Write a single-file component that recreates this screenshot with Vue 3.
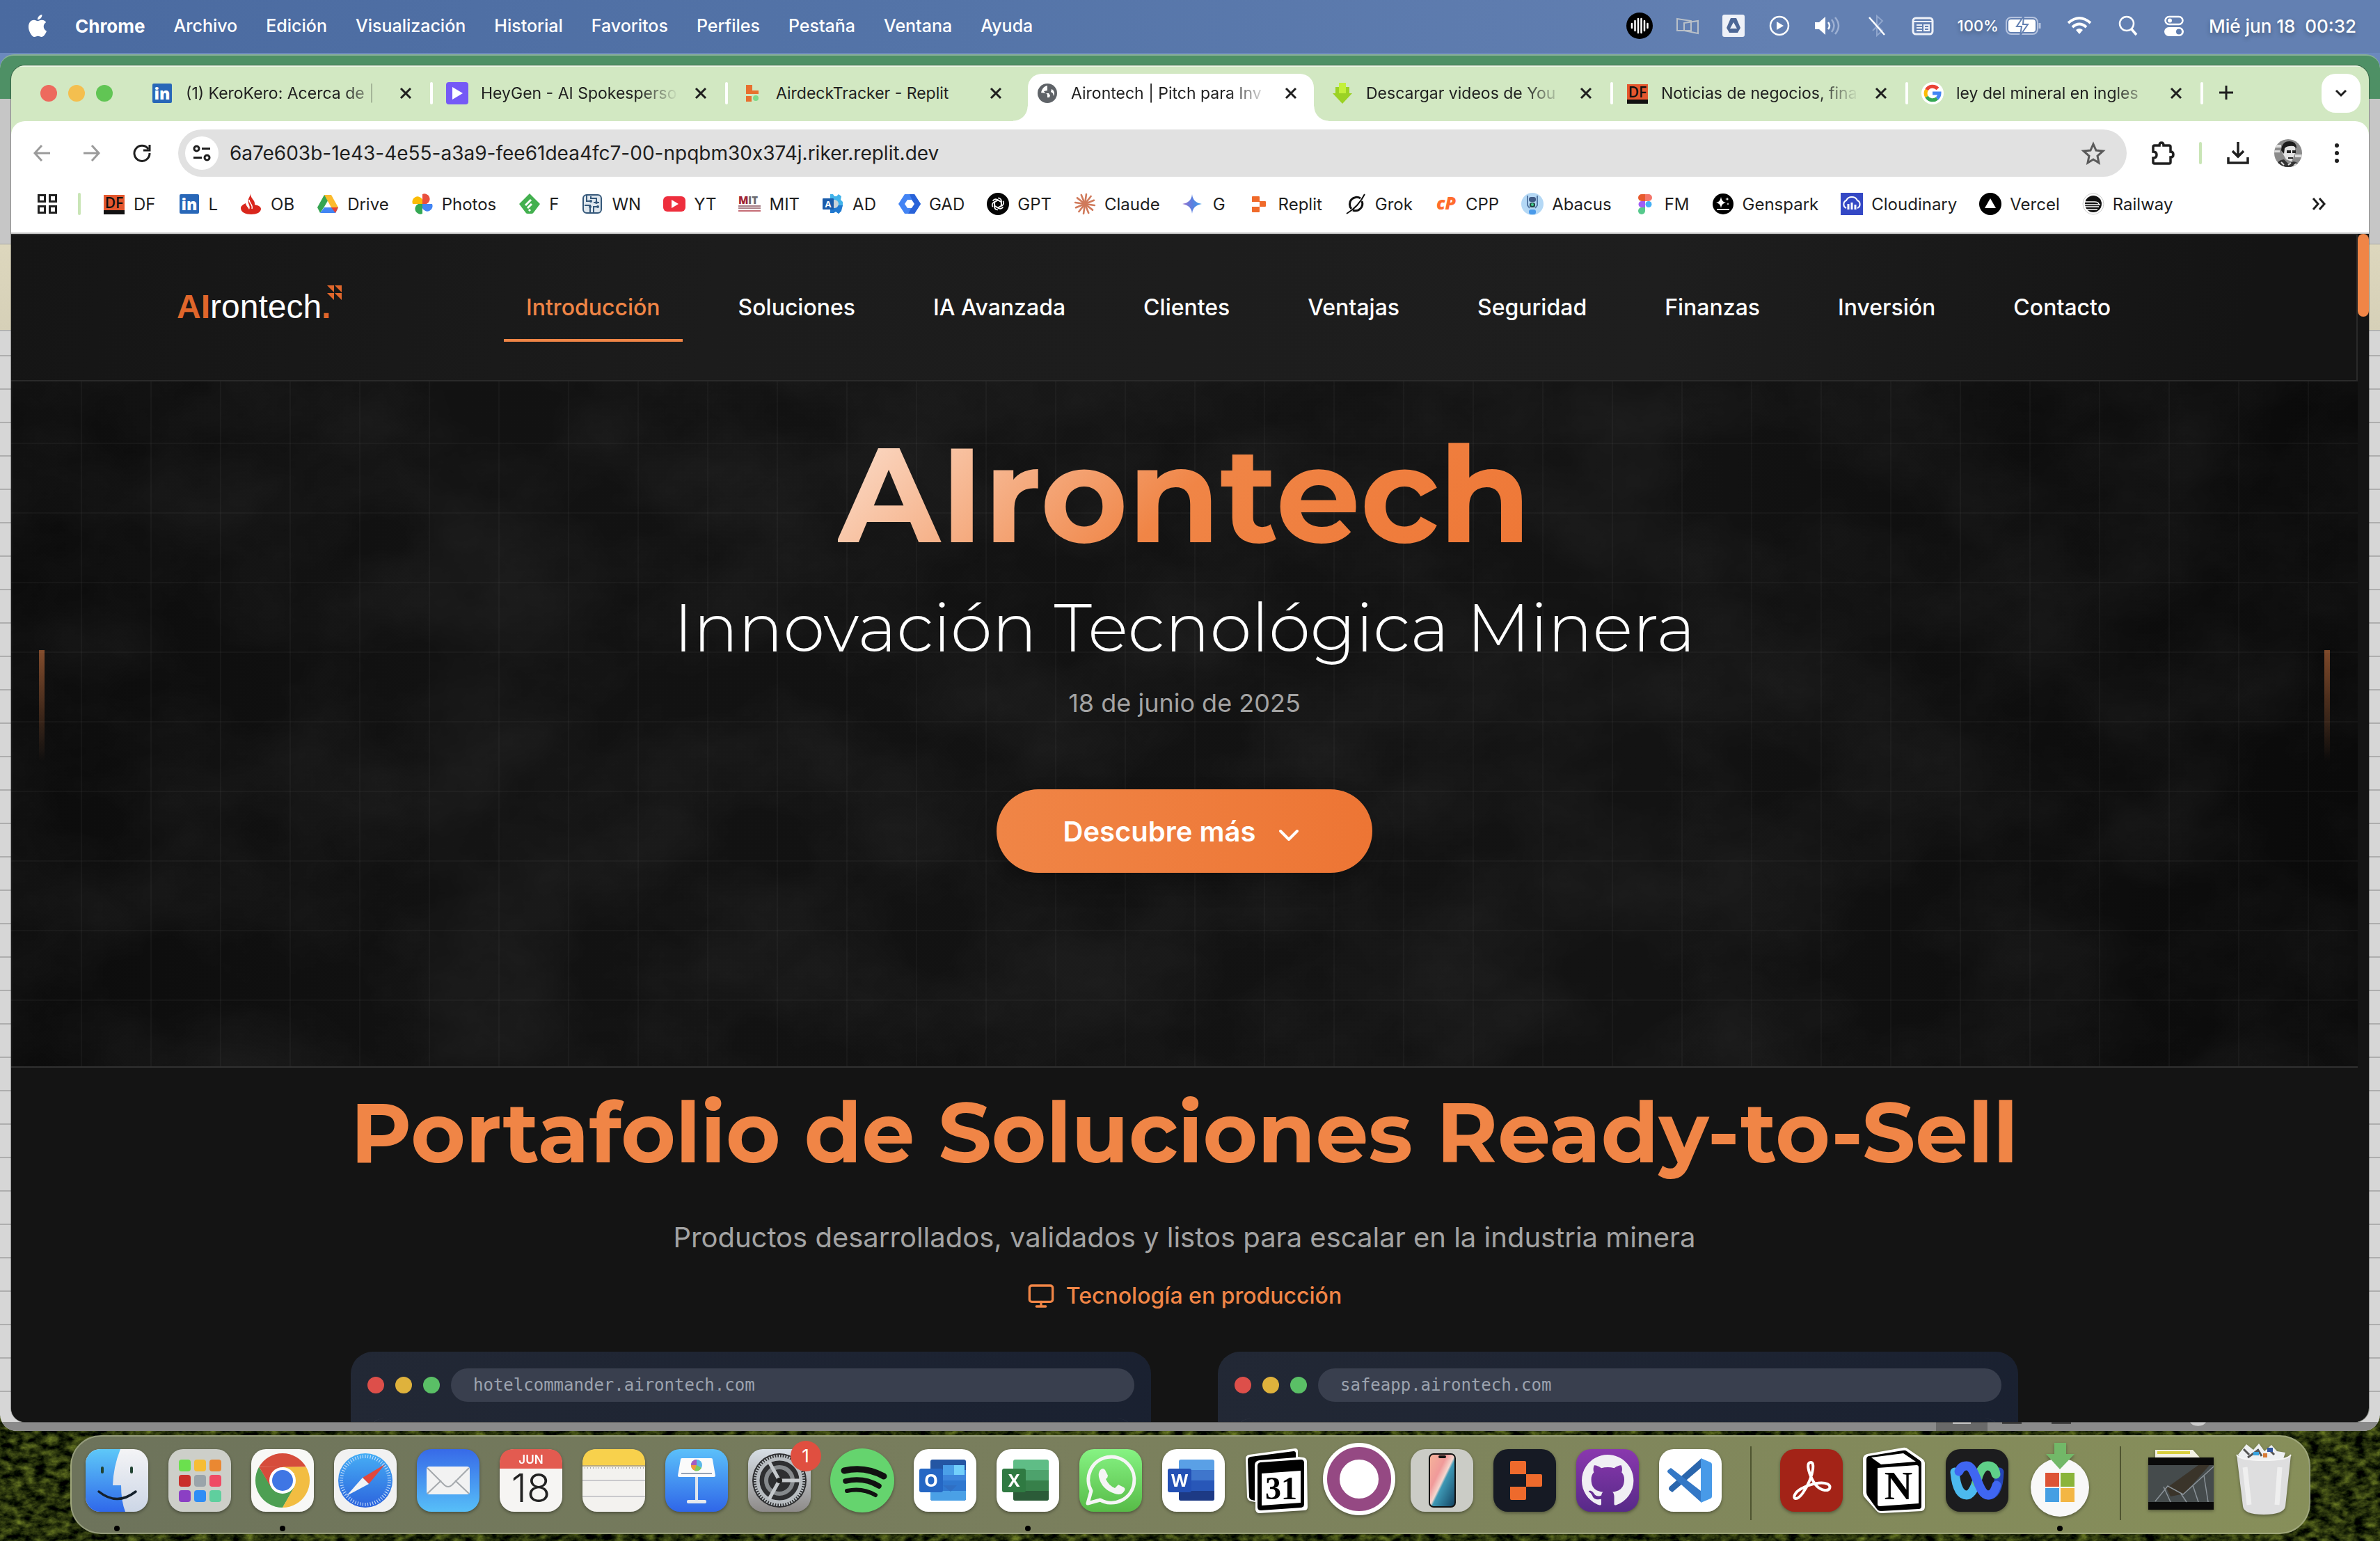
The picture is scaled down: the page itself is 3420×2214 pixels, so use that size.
<script setup>
const menus = ['Archivo', 'Edición', 'Visualización', 'Historial', 'Favoritos', 'Perfiles', 'Pestaña', 'Ventana', 'Ayuda']

const li = '<rect x="2" y="2" width="28" height="28" rx="2" fill="#2867b8"/><text x="16" y="25" font-family="Open Sans" font-weight="800" font-size="23" fill="#fff" text-anchor="middle">in</text>'
const df = '<rect x="1" y="3" width="30" height="27" fill="#e4572e"/><text x="16" y="22" font-family="Open Sans" font-size="21" font-weight="600" fill="#111" text-anchor="middle">DF</text><rect x="1" y="25" width="30" height="6" fill="#111"/>'

const tabs = [
  { title: '(1) KeroKero: Acerca de |', svg: li },
  { title: 'HeyGen - AI Spokesperso', svg: '<rect width="32" height="32" rx="4" fill="#7559f6"/><path d="M9 7l15 9-15 9z" fill="#fff"/>' },
  { title: 'AirdeckTracker - Replit', full: true, svg: '<path d="M7 4h9v8h9v5H7zM7 20h8v8H7z" fill="#e8702f"/><circle cx="21" cy="23" r="4" fill="#7fd98a"/>' },
  { title: 'Airontech | Pitch para Inv', active: true, svg: '<circle cx="16" cy="16" r="14" fill="#5f6368"/><path d="M16 5c-5 1-8 5-9 10l6 1c2 0 3 1 3 3v3h3l1-3-2-3h-5l-2-3 5-1V8zm6 5l-1 4 3 2 1 4c2-4 1-8-3-10z" fill="#fff"/>' },
  { title: 'Descargar videos de You', svg: '<path d="M11 1h10v6h5v9h4L16 31 2 16h4V7h5z" fill="#9bd224"/><path d="M11 1h10v15H11z" fill="#c3f03a"/>' },
  { title: 'Noticias de negocios, fina', svg: df },
  { title: 'ley del mineral en ingles', svg: '<circle cx="16" cy="16" r="16" fill="#fff"/><g fill="none" stroke-width="5"><path d="M23.500 9.500A10 10 0 0 0 7.500 11" stroke="#ea4335"/><path d="M7.500 11a10 10 0 0 0 0 10" stroke="#fbbc05"/><path d="M7.500 21a10 10 0 0 0 15 2.500" stroke="#34a853"/><path d="M22.500 23.500a10 10 0 0 0 3.500-7.500h-10" stroke="#4285f4"/></g>' }
]

const rays = Array.from({ length: 12 }, (_, i) => `<path d="M16 16V2" transform="rotate(${i * 30 + 8} 16 16)"/>`).join('')
const knot = [0, 60, 120, 180, 240, 300].map(a => `<path d="M16 7.500a5 5 0 0 1 5 4v7l-5 3" transform="rotate(${a} 16 16)"/>`).join('')

const bookmarks = [
  { t: 'DF', svg: df },
  { t: 'L', svg: li },
  { t: 'OB', svg: '<path d="M15 1c0 8 7 9 6 16 5 1 9 3 9 6 0 5-6 8-14 8S1 28 1 22c0-3 3-5 7-7 0 3 3 5 5 9 3-5-3-8-1-15 1-3 3-5 3-8z" fill="#d9261c"/><path d="M13 10c0 5 6 7 4 13" stroke="#fff" stroke-width="1.500" fill="none"/>' },
  { t: 'Drive', svg: '<path d="M11 3h10L11 20l-6 9-4-8z" fill="#35a552"/><path d="M11 3h10l10 18H21z" fill="#fcbb2d"/><path d="M11 21h20l-4 8H5z" fill="#4285f4"/><path d="M21 21h10l-4 8z" fill="#e54335"/>' },
  { t: 'Photos', svg: '<path d="M16 2v14h6a7 7 0 0 0-6-14z" fill="#e94f3d"/><path d="M30 16H16v6a7 7 0 0 0 14-6z" fill="#4285f4"/><path d="M16 30V16h-6a7 7 0 0 0 6 14z" fill="#34a853"/><path d="M2 16h14v-6a7 7 0 0 0-14 6z" fill="#fbbc05"/>' },
  { t: 'F', svg: '<path d="M16 1l15 15-9 12q-1 2-3 2h-6q-2 0-3-2L1 16z" fill="#43b04f"/><path d="M10 18l8-8M13 22l6-6M15 26l2-2" stroke="#fff" stroke-width="3"/>' },
  { t: 'WN', svg: '<rect x="3" y="3" width="26" height="26" rx="5" fill="#dfe7ee" stroke="#35587a" stroke-width="2"/><path d="M8 4v8h6M14 5v3h8v6M5 18h8v10M18 28v-8h6M18 14h8" stroke="#35587a" stroke-width="2" fill="none"/><g fill="#35587a"><circle cx="14" cy="12" r="2"/><circle cx="22" cy="14" r="2"/><circle cx="13" cy="20" r="2"/><circle cx="24" cy="20" r="2"/></g>' },
  { t: 'YT', svg: '<rect y="5" width="32" height="22" rx="6" fill="#ee2e3d"/><path d="M12 10l10 6-10 6z" fill="#fff"/>' },
  { t: 'MIT', svg: '<text x="0" y="16" font-family="Open Sans" font-weight="800" font-size="15" fill="#9e2235">M</text><text x="14" y="16" font-family="Open Sans" font-weight="800" font-size="15" fill="#6b6b70">IT</text><path d="M0 19h32M0 22h32" stroke="#8a5560" stroke-width="1.500"/><path d="M0 26h32" stroke="#c56c75" stroke-width="2"/>' },
  { t: 'AD', svg: '<path d="M12 2h4l2 3h3l3-3 4 3-1 5 3 3v6l-3 2 1 5-4 4-4-3-3 2h-5z" fill="#41b3ea"/><path d="M12 18h18l-2 8-4 4-4-3-3 2h-5z" fill="#2178cf"/><circle cx="18" cy="16" r="6" fill="#c9d3da"/><rect x="1" y="8" width="16" height="16" rx="1" fill="#1b5cab"/><text x="9" y="21" font-family="Open Sans" font-weight="700" font-size="13" fill="#fff" text-anchor="middle">A</text>' },
  { t: 'GAD', svg: '<path d="M9 2h14l9 14-9 14H9L0 16z" fill="#4384f4"/><path d="M16 2h7l9 14-9 14h-9l8-14z" fill="#2862d8"/><path d="M13 10h6l4 6-4 6h-6l-4-6z" fill="#fff"/>' },
  { t: 'GPT', svg: `<circle cx="16" cy="16" r="16" fill="#050505"/><g fill="none" stroke="#fff" stroke-width="1.600">${knot}</g>` },
  { t: 'Claude', svg: `<g stroke="#d07a5b" stroke-width="2.600" stroke-linecap="round">${rays}</g>` },
  { t: 'G', svg: '<defs><linearGradient id="gem"><stop offset="0" stop-color="#9b72cb"/><stop offset=".5" stop-color="#5b7fe0"/><stop offset="1" stop-color="#3fa0e8"/></linearGradient></defs><path d="M14 2q1 12 14 14-13 2-14 14-1-12-14-14 13-2 14-14z" fill="url(#gem)"/>' },
  { t: 'Replit', svg: '<path d="M7 5h9q1 0 1 1v7H6V6q0-1 1-1zM17 12h8q1 0 1 1v6q0 1-1 1h-8zM6 20h11v7q0 1-1 1H7q-1 0-1-1z" fill="#f06a2a"/>' },
  { t: 'Grok', svg: '<g fill="none" stroke="#111" stroke-width="3"><path d="M23 8a10 10 0 0 0-13 15M25 12a10 10 0 0 1-13 13"/><path d="M29 2Q20 20 3 30" stroke-width="2"/></g>' },
  { t: 'CPP', svg: '<text x="16" y="24" font-family="Open Sans" font-weight="800" font-style="italic" font-size="25" fill="#ff6c2c" text-anchor="middle">cP</text>' },
  { t: 'Abacus', svg: '<circle cx="16" cy="16" r="16" fill="#b4d8f5"/><path d="M9 4v14l3 4M23 4v14l-3 4" stroke="#5579a5" stroke-width="2" fill="none"/><rect x="11" y="6" width="10" height="7" rx="3" fill="#405a85"/><rect x="12" y="14" width="8" height="7" rx="3" fill="#244"/><circle cx="16" cy="17" r="2" fill="#3fd08c"/><rect x="11" y="24" width="10" height="7" rx="3" fill="#4a9aea"/>' },
  { t: 'FM', svg: '<path d="M11 2h5v10h-5a5 5 0 0 1 0-10z" fill="#e75b2e"/><path d="M16 2h5a5 5 0 0 1 0 10h-5z" fill="#f4756a"/><path d="M11 12h5v9h-5a4.500 4.500 0 0 1 0-9z" fill="#a05cf5"/><circle cx="21" cy="16.500" r="4.500" fill="#45b0f5"/><path d="M11 21h5v5a5 5 0 1 1-5-5z" fill="#56c98c"/>' },
  { t: 'Genspark', svg: '<circle cx="16" cy="16" r="15" fill="#000"/><path d="M13 6q1 7 7 8-6 1-7 8-1-7-7-8 6-1 7-8zM22 6q0 3 3 3-3 0-3 3 0-3-3-3 3 0 3-3zM23 14q0 2 2 2-2 0-2 2 0-2-2-2 2 0 2-2z" fill="#fff"/><path d="M7 24h18" stroke="#fff" stroke-width="2"/>' },
  { t: 'Cloudinary', svg: '<rect width="32" height="32" fill="#3448c5"/><path d="M8 22a6 6 0 0 1 0-11 9 9 0 0 1 16 0 6 6 0 0 1 0 11" fill="none" stroke="#fff" stroke-width="2"/><path d="M11 16v8M16 14v10M21 17v7" stroke="#fff" stroke-width="3"/>' },
  { t: 'Vercel', svg: '<circle cx="16" cy="16" r="16" fill="#000"/><path d="M16 8l8 14H8z" fill="#fff"/>' },
  { t: 'Railway', svg: '<circle cx="16" cy="16" r="15" fill="#fff" stroke="#ccc"/><circle cx="16" cy="16" r="12" fill="#111"/><path d="M4 13h14q5 0 6 3M4 17h22M4 20h20M6 24h16" stroke="#fff" stroke-width="1.500" fill="none"/>' }
]

const nav = ['Introducción', 'Soluciones', 'IA Avanzada', 'Clientes', 'Ventajas', 'Seguridad', 'Finanzas', 'Inversión', 'Contacto']
const cards = ['hotelcommander.airontech.com', 'safeapp.airontech.com']

const tile = f => `<rect width="90" height="90" rx="21" fill="${f}"/>`
const launch = ['#6be04e', '#f6bd35', '#ea8832', '#c9302a', '#9aa4aa', '#ef4a64', '#8b3fc4', '#2f8df5', '#5fcf9e']
  .map((c, i) => `<rect x="${15 + (i % 3) * 22}" y="${15 + Math.floor(i / 3) * 22}" width="17" height="17" rx="4" fill="${c}"/>`).join('')
const ticks = (r1, r2, n, w, c) => Array.from({ length: n }, (_, i) => `<path d="M45 ${45 - r1}V${45 - r2}" stroke="${c}" stroke-width="${w}" transform="rotate(${i * 360 / n} 45 45)"/>`).join('')
const office = (l, c, a) => `${tile('#fff')}<rect x="24" y="15" width="51" height="59" rx="3" fill="${a[0]}"/><path d="M24 30h51v15H24z" fill="${a[1]}"/><path d="M24 45h51v15H24z" fill="${a[2]}"/><path d="M24 60h51v11q0 3-3 3H27q-3 0-3-3z" fill="${a[3]}"/><rect x="8" y="28" width="34" height="34" rx="3" fill="${c}"/><text x="25" y="54" font-family="Open Sans" font-weight="700" font-size="25" fill="#fff" text-anchor="middle">${l}</text>`
const git = 'M8 0C3.58 0 0 3.58 0 8c0 3.54 2.29 6.53 5.47 7.59.4.07.55-.17.55-.38 0-.19-.01-.82-.01-1.49-2.01.37-2.53-.49-2.69-.94-.09-.23-.48-.94-.82-1.13-.28-.15-.68-.52-.01-.53.63-.01 1.08.58 1.23.82.72 1.21 1.87.87 2.33.66.07-.52.28-.87.51-1.07-1.78-.2-3.64-.89-3.64-3.95 0-.87.31-1.59.82-2.15-.08-.2-.36-1.02.08-2.12 0 0 .67-.21 2.2.82.64-.18 1.32-.27 2-.27.68 0 1.36.09 2 .27 1.53-1.04 2.2-.82 2.2-.82.44 1.1.16 1.92.08 2.12.51.56.82 1.27.82 2.15 0 3.07-1.87 3.75-3.65 3.95.29.25.54.73.54 1.48 0 1.07-.01 1.93-.01 2.2 0 .21.15.46.55.38A8.013 8.013 0 0016 8c0-4.42-3.58-8-8-8z'

const dock = [
  { n: 'Finder', dot: true, svg: '<defs><clipPath id="fc"><rect width="90" height="90" rx="21"/></clipPath><linearGradient id="fb" x2="0" y2="1"><stop stop-color="#5ec8f8"/><stop offset="1" stop-color="#2f68ea"/></linearGradient><linearGradient id="fw" x2="0" y2="1"><stop stop-color="#f4f4f6"/><stop offset="1" stop-color="#ccd6e6"/></linearGradient></defs><g clip-path="url(#fc)"><path d="M0 0h90v90H0z" fill="url(#fw)"/><path d="M0 0h50Q40 25 39 52h12q0 22 6 38H0z" fill="url(#fb)"/></g><path d="M24 27v6M66 27v6" stroke="#243" stroke-width="4" stroke-linecap="round"/><path d="M19 61q26 21 53 0" fill="none" stroke="#14202c" stroke-width="3.500" stroke-linecap="round"/>' },
  { n: 'Launchpad', svg: tile('#cdcfc9') + launch },
  { n: 'Google Chrome', dot: true, svg: tile('#f8f8f6') + '<path d="M11.200 25.500a39 39 0 0 1 67.600 0L45 26z" fill="#d64c3b"/><path d="M11.200 25.500a39 39 0 0 0 33.800 58.500L62 55 45 45 28 53z" fill="#4d9f53"/><path d="M78.800 25.500a39 39 0 0 1-33.800 58.500L62 54 62 35 45 25.500z" fill="#f2bd42"/><path d="M11.200 25.500L28 54 45 25.500z" fill="#d64c3b"/><circle cx="45" cy="45" r="19" fill="#fff"/><circle cx="45" cy="45" r="15" fill="#3f76e4"/>' },
  { n: 'Safari', svg: tile('#f1f1f1') + '<defs><linearGradient id="sf" x2="0" y2="1"><stop stop-color="#46aef5"/><stop offset="1" stop-color="#2c63dd"/></linearGradient></defs><circle cx="45" cy="45" r="39" fill="url(#sf)"/>' + ticks(37, 32, 60, 1, '#cfe4fb') + '<path d="M73 22L50 50l-9-9z" fill="#e2483d"/><path d="M18 67l23-26 9 9z" fill="#f1f3f5"/>' },
  { n: 'Mail', svg: '<defs><linearGradient id="ml" x2="0" y2="1"><stop stop-color="#376ae8"/><stop offset="1" stop-color="#57bff8"/></linearGradient></defs>' + tile('url(#ml)') + '<rect x="14" y="25" width="62" height="40" rx="4" fill="#f2f2f2"/><path d="M15 27l25 25q5 4 10 0l25-25M15 64l20-19M75 64L55 45" fill="none" stroke="#a5a9ad" stroke-width="2"/>' },
  { n: 'Calendario', svg: tile('#f6f5f3') + '<path d="M0 28V21Q0 0 21 0h48q21 0 21 21v7z" fill="#e35b50"/><text x="45" y="21" font-family="Inter" font-weight="600" font-size="17" fill="#fff" text-anchor="middle">JUN</text><text x="45" y="76" font-family="Inter" font-weight="300" font-size="56" fill="#222" text-anchor="middle">18</text>' },
  { n: 'Notas', svg: tile('#f3f2ef') + '<path d="M0 23V21Q0 0 21 0h48q21 0 21 21v2z" fill="#f8d14c"/><path d="M0 24h90" stroke="#b9a878" stroke-width="2"/><path d="M3 27h86" stroke="#aaa" stroke-width="2" stroke-dasharray="1 3"/><path d="M0 45h90M0 68h90" stroke="#c9c9cc" stroke-width="2"/>' },
  { n: 'Keynote', svg: '<defs><linearGradient id="kn" x2="0" y2="1"><stop stop-color="#5bc0fa"/><stop offset="1" stop-color="#2f66e8"/></linearGradient></defs>' + tile('url(#kn)') + '<path d="M43 40h4v34h-4z" fill="#dfe5ee"/><rect x="31" y="73" width="28" height="5" rx="2" fill="#e5e8ee"/><path d="M24 13h42q2 0 2 2l4 23q0 2-2 2H20q-2 0-2-2l4-23q0-2 2-2z" fill="#fbfbfb"/><path d="M23 35h44" stroke="#96a3b5" stroke-width="2"/><circle cx="45" cy="23" r="8" fill="#5ab8e8"/><path d="M45 23v-8a8 8 0 0 0-8 8z" fill="#a65abf"/><path d="M45 23h-8a8 8 0 0 0 6 8z" fill="#f09a3a"/><path d="M45 23l-3 8q6 2 10-4z" fill="#7dcc5a"/>' },
  { n: 'Ajustes del Sistema', badge: '1', svg: '<defs><linearGradient id="st" x2="0" y2="1"><stop stop-color="#d7dfe6"/><stop offset="1" stop-color="#8d8a88"/></linearGradient></defs>' + tile('url(#st)') + '<circle cx="45" cy="45" r="39" fill="#2e2f31"/>' + ticks(37, 33, 60, 2, '#bcc2c6') + '<circle cx="45" cy="45" r="31" fill="none" stroke="#b7bcc0" stroke-width="5"/><circle cx="45" cy="45" r="19" fill="none" stroke="#85898c" stroke-width="6"/><path d="M45 45h30M45 45L30 18M45 45L30 72" stroke="#c5c9cc" stroke-width="5"/><circle cx="45" cy="45" r="4" fill="#222"/>' },
  { n: 'Spotify', svg: '<circle cx="45" cy="45" r="46" fill="#65d46e"/><g fill="none" stroke="#111" stroke-linecap="round"><path d="M19 31q30-7 57 8" stroke-width="9"/><path d="M21 46q26-6 48 7" stroke-width="7.500"/><path d="M23 60q22-5 41 6" stroke-width="6"/></g>' },
  { n: 'Outlook', svg: office('O', '#2567c4', ['#2456a3', '#3e86dc', '#2f78d0', '#4aa0e6']) + '<path d="M42 23h16v14H42z" fill="#4ba0e8"/><path d="M58 23h15v14H58z" fill="#73d0fb"/><path d="M42 52h20l-9 9z" fill="#2f6fc4"/>' },
  { n: 'Excel', dot: true, svg: office('X', '#2f7a42', ['#5fbd86', '#4da26c', '#37804a', '#2b5b38']) },
  { n: 'WhatsApp', svg: '<defs><linearGradient id="wa" x2="0" y2="1"><stop stop-color="#86f383"/><stop offset="1" stop-color="#57bb47"/></linearGradient></defs>' + tile('url(#wa)') + '<path d="M12 78l5-18A33 33 0 1 1 30 73z" fill="none" stroke="#f5f5f5" stroke-width="5" stroke-linejoin="round"/><path d="M30 30q4-4 7 0l4 8q0 3-3 5 4 9 13 13l5-5 8 4q3 2 0 6-4 6-13 3Q32 58 28 40q-1-6 2-10z" fill="#f5f5f5"/>' },
  { n: 'Word', svg: office('W', '#2350b5', ['#5aa0e6', '#3f76cc', '#2857b8', '#1d3a85']) },
  { n: 'Notion Calendar', svg: '<path d="M6 8L72 -1q4 0 4 4v8l8 1q5 1 5 6l1 65q0 5-5 5l-64 4q-5 0-6-5V76l-6-1q-5-1-6-6L1 14q0-5 5-6z" fill="#fff"/><path d="M8 11l62-8q3 0 3 3v6l-52 4q-7 1-7 7v51l-4-1q-4-1-4-5L4 16q0-4 4-5z" fill="#000"/><path d="M22 19l58-4q5 0 5 5v59q0 4-4 5l-58 4q-5 0-5-5V24q0-4 4-5z" fill="#000"/><path d="M24 35l56-4v46l-56 4z" fill="#fff"/><text x="52" y="72" font-family="Liberation Serif" font-weight="700" font-size="46" text-anchor="middle">31</text>' },
  { n: 'Navegador', svg: '<circle cx="45" cy="43" r="52" fill="#fff"/><circle cx="45" cy="43" r="37" fill="none" stroke="#954983" stroke-width="18"/>' },
  { n: 'Duplicación del iPhone', svg: tile('#cbccc6') + '<defs><linearGradient id="ph" x2="1" y2="1"><stop stop-color="#f5b49a"/><stop offset=".35" stop-color="#f09a9a"/><stop offset=".5" stop-color="#f6d8cf"/><stop offset=".55" stop-color="#3d98b5"/><stop offset="1" stop-color="#123f5e"/></linearGradient></defs><rect x="27" y="7" width="37" height="76" rx="6" fill="url(#ph)" stroke="#111" stroke-width="2"/><rect x="40" y="9" width="11" height="4" rx="2" fill="#111"/>' },
  { n: 'Replit', svg: tile('#161a24') + '<path d="M26 17h19q2 0 2 2v17H24V19q0-2 2-2zM47 36h21q2 0 2 2v14q0 2-2 2H47zM24 54h23v17q0 2-2 2H26q-2 0-2-2z" fill="#ee6a2c"/>' },
  { n: 'GitHub Desktop', svg: '<defs><linearGradient id="gh" x2="0" y2="1"><stop stop-color="#8a38ae"/><stop offset="1" stop-color="#572a88"/></linearGradient></defs>' + tile('url(#gh)') + `<g transform="translate(8 8) scale(4.650)"><path d="${git}" fill="#f0eff4"/></g>` },
  { n: 'Visual Studio Code', svg: tile('#fff') + '<path d="M60 14L15 54q-2 3 0 5l4 3 41-35z" fill="#2a66ad"/><path d="M60 76L13 34q-2-2 0-4l4-3 43 33z" fill="#3478c6"/><path d="M60 13l14 6q2 1 2 3v46q0 2-2 3l-14 6z" fill="#489ae8"/>' },
  { sep: true },
  { n: 'Acrobat', svg: tile('#a32317') + '<path d="M44 19c-6 0-4 10 0 20 5 12 12 19 20 20 8 1 10-6 4-9-9-4-25 0-38 7-9 5-12 13-8 14 6 1 15-13 20-25 5-11 8-27 2-27z" fill="none" stroke="#fff" stroke-width="4"/>' },
  { n: 'Notion', svg: '<path d="M6 7L57-2q5-1 8 2l19 13q5 3 5 8v62q0 5-5 6l-57 3q-5 0-8-4L3 70q-3-3-3-7V14q0-5 6-7z" fill="#fff"/><path d="M8 10l49-8q4-1 6 1l17 12q4 2 4 6v61q0 4-4 4l-54 3q-4 0-6-3L7 68q-2-3-2-6V15q0-4 3-5z"/><path d="M12 12l46-6 18 12-50 4z" fill="#fff"/><path d="M21 27l56-4q3 0 3 3v52l-56 4q-3 0-3-3z" fill="#fff"/><text x="51" y="72" font-family="Liberation Serif" font-weight="700" font-size="56" text-anchor="middle">N</text>' },
  { n: 'Webex', svg: tile('#1c1c1e') + '<g fill="none" stroke-width="13" stroke-linecap="round"><path d="M77 33Q76 66 61 66" stroke="#2546b8"/><path d="M13 33Q16 66 30 66 39 66 46 42" stroke="#4cb9ee"/><path d="M44 48Q50 24 60 24q10 0 12 12" stroke="#5fd089"/><path d="M19 32q3-8 11-8c14 0 16 42 31 42q8 0 12-14" stroke="#3f66f2"/></g>' },
  { n: 'Microsoft', dot: true, svg: '<circle cx="45" cy="55" r="42" fill="#f8f8f8"/><path d="M24 34h20v20H24z" fill="#dd5436"/><path d="M46 34h20v20H46z" fill="#8ab43a"/><path d="M24 56h20v20H24z" fill="#459fe3"/><path d="M46 56h20v20H46z" fill="#f3b644"/><path d="M37-9h17V7h12L45 29 25 7h12z" fill="#72b868"/>' },
  { sep: true },
  { n: 'Descargas', svg: '<path d="M8 1h54l10 11H8z" fill="#f3f1e4"/><path d="M11 3h47v4H11z" fill="#d9cf3e"/><path d="M-2 12h94v75H-2z" fill="#0a0a0a"/><path d="M-2 23h94v53H-2z" fill="#454b4c"/><path d="M24 56L70 23h16L50 64l-20 4z" fill="#3a342a"/><path d="M8 75l18-22 22 12 44-40M20 54l10 22M45 64l8 12M62 52l8 24M78 38l6 38" stroke="#8a9298" stroke-width="1.500" fill="none"/>' },
  { n: 'Papelera', svg: '<path d="M8 8L20-7l10 8L38-8 46 3 56-6l8 9 12 2-4 12H14z" fill="#eef0f2"/><path d="M16 0l8 8M36 0l6 10M52 0l8 8M22 12L36 2" stroke="#555" stroke-width="3"/><path d="M30 4h8v5h-8z" fill="#38a3e0"/><path d="M50-2h8v6h-8z" fill="#3257a0"/><path d="M44 6h6v6h-6z" fill="#d77a36"/><path d="M6 8q4 8 39 8t39-8l-8 74q-2 12-31 12t-30-12z" fill="#dededf"/><path d="M6 8q4 8 39 8t39-8" fill="none" stroke="#f5f5f5" stroke-width="2"/><path d="M18 26l6 54M68 26l-4 54" stroke="#efefef" stroke-width="7"/>' }
]
</script>

<template>
  <div class="desktop">
    <svg class="grass" aria-hidden="true">
      <filter id="turf" x="0" y="0" width="100%" height="100%" color-interpolation-filters="sRGB">
        <feTurbulence type="fractalNoise" baseFrequency=".06 .1" numOctaves="5" seed="4" />
        <feColorMatrix values=".7 0 0 0 -.2  .76 0 0 0 -.19  .25 0 0 0 -.08  0 0 0 0 1" />
      </filter>
      <rect width="100%" height="100%" filter="url(#turf)" />
    </svg>

    <header class="menubar">
      <svg class="apple" viewBox="0 0 24 24"><path d="M12.152 6.896c-.948 0-2.415-1.078-3.96-1.040-2.040.027-3.910 1.183-4.961 3.014-2.117 3.675-.546 9.103 1.519 12.090 1.013 1.454 2.208 3.090 3.792 3.039 1.520-.065 2.090-.987 3.935-.987 1.831 0 2.350.987 3.960.948 1.637-.026 2.676-1.480 3.676-2.948 1.156-1.688 1.636-3.325 1.662-3.415-.039-.013-3.182-1.221-3.220-4.857-.026-3.040 2.480-4.494 2.597-4.559-1.429-2.090-3.623-2.324-4.390-2.376-2-.156-3.675 1.090-4.610 1.090zM15.530 3.830c.843-1.012 1.400-2.427 1.245-3.830-1.207.052-2.662.805-3.532 1.818-.780.896-1.454 2.338-1.273 3.714 1.338.104 2.715-.688 3.559-1.701" fill="#fff" /></svg>
      <button class="menu app">Chrome</button>
      <button v-for="m in menus" :key="m" class="menu">{{ m }}</button>
      <div class="status">
        <svg width="38" height="38" viewBox="0 0 38 38"><circle cx="19" cy="19" r="19" fill="#000" /><path d="M8 16v6M12.500 12v14M17 9v20M21.500 9v20M26 12v14M30.500 16v6" stroke="#fff" stroke-width="2.500" stroke-linecap="round" /></svg>
        <svg width="32" height="32" viewBox="0 0 32 32" fill="none" stroke="#b9c0c8" stroke-width="2"><path d="M1 6l20 3v14H1zM11 12l20-3v18l-20-4z" /></svg>
        <svg width="32" height="32" viewBox="0 0 32 32"><rect width="32" height="32" rx="3" fill="#eef1f8" /><path d="M12 5h8l6 14-4 7H10l-4-7z" fill="#4d6796" /><path d="M16 11l5 9H11z" fill="#eef1f8" /></svg>
        <svg width="32" height="32" viewBox="0 0 32 32"><circle cx="16" cy="16" r="13" fill="none" stroke="#fff" stroke-width="2.500" /><path d="M12 10l10 6-10 6z" fill="#fff" /></svg>
        <svg width="40" height="32" viewBox="0 0 40 32"><path d="M1 11h6l9-8v26l-9-8H1z" fill="#fff" /><path d="M20 11q4 5 0 10" stroke="#fff" stroke-width="2.500" fill="none" /><path d="M25 7q7 9 0 18M30 4q10 12 0 24" stroke="#9db0d3" stroke-width="2.500" fill="none" /></svg>
        <svg width="32" height="32" viewBox="0 0 32 32" fill="none"><path d="M10 9l14 14-8 7V2l8 7-14 14" stroke="#8fa5cc" stroke-width="2" /><path d="M5 4l22 25" stroke="#fff" stroke-width="2.500" /></svg>
        <svg width="32" height="32" viewBox="0 0 32 32"><rect x="2" y="5" width="28" height="23" rx="4" fill="none" stroke="#eef1f8" stroke-width="3" /><path d="M2 10h28M7 15h8M7 19h8M7 23h8M18 15h7v8h-7zM18 19h7" stroke="#eef1f8" stroke-width="2" fill="none" /></svg>
        <span class="battery"><small>100%</small>
          <svg width="52" height="28" viewBox="0 0 52 28"><rect x="1" y="2" width="45" height="24" rx="7" fill="none" stroke="#b4c2de" stroke-width="2" /><rect x="4" y="5" width="39" height="18" rx="4" fill="#fff" /><path d="M26 0L16 15h7l-2 13 11-16h-7z" fill="#fff" stroke="#6380b2" stroke-width="2" /><path d="M49 10v8" stroke="#b4c2de" stroke-width="3" /></svg></span>
        <svg width="40" height="28" viewBox="0 0 36 28" fill="none" stroke="#fff" stroke-width="4"><path d="M2 10q16-14 32 0M8 16q10-9 20 0" /><path d="M13 20q5-4 10 0l-5 6z" fill="#fff" stroke="none" /></svg>
        <svg width="32" height="30" viewBox="0 0 28 30" fill="none" stroke="#fff" stroke-width="2.500"><circle cx="12" cy="12" r="10" /><path d="M19 20l7 8" stroke-width="3.500" /></svg>
        <svg width="32" height="30" viewBox="0 0 28 30"><rect x="1.500" y="2" width="25" height="11" rx="5.500" fill="none" stroke="#fff" stroke-width="2.500" /><circle cx="8" cy="7.500" r="3" fill="#fff" /><rect y="17" width="28" height="13" rx="6.500" fill="#fff" /><circle cx="21" cy="23.500" r="4" fill="#5d7bae" /></svg>
        <time class="clock">Mié jun 18&nbsp; 00:32</time>
      </div>
    </header>

    <div class="sheet">
      <section class="window">
        <div class="tabstrip">
          <div class="lights"><i class="r"></i><i class="y"></i><i class="g"></i></div>
          <div v-for="t in tabs" :key="t.title" class="tab" :class="{ active: t.active, full: t.full }">
            <svg class="fav" viewBox="0 0 32 32" v-html="t.svg"></svg>
            <button class="tabname">{{ t.title }}</button>
            <button class="close" aria-label="Cerrar pestaña"><svg width="16" height="16" viewBox="0 0 16 16"><path d="M1 1l14 14M15 1L1 15" stroke="#1f1f1f" stroke-width="3" /></svg></button>
          </div>
          <button class="plus" aria-label="Nueva pestaña"><svg width="20" height="20" viewBox="0 0 20 20"><path d="M10 0v20M0 10h20" stroke="#1f1f1f" stroke-width="3" /></svg></button>
          <button class="search-tabs" aria-label="Buscar pestañas"><svg width="18" height="12" viewBox="0 0 18 12"><path d="M2 2l7 7 7-7" fill="none" stroke="#1f1f1f" stroke-width="3" /></svg></button>
        </div>

        <div class="toolbar">
          <button class="tool" aria-label="Atrás"><svg width="24" height="24" viewBox="0 0 24 24" fill="none" stroke="#9b9b9b" stroke-width="3"><path d="M12 1L2 12l10 11M2 12h22" /></svg></button>
          <button class="tool" aria-label="Adelante"><svg width="24" height="24" viewBox="0 0 24 24" fill="none" stroke="#9b9b9b" stroke-width="3"><path d="M12 1l10 11-10 11M22 12H0" /></svg></button>
          <button class="tool" aria-label="Recargar"><svg width="26" height="26" viewBox="0 0 26 26" fill="none" stroke="#1f1f1f" stroke-width="3"><path d="M22 7a11 11 0 1 0 2 6M24 1v8h-9" /></svg></button>
          <label class="omnibox">
            <span class="site"><svg width="26" height="26" viewBox="0 0 26 26" fill="none" stroke="#1f1f1f" stroke-width="3"><circle cx="5.500" cy="6.500" r="3.500" /><path d="M13 6.500h12M1 19.500h12" /><circle cx="20.500" cy="19.500" r="3.500" /></svg></span>
            <input aria-label="Dirección" value="6a7e603b-1e43-4e55-a3a9-fee61dea4fc7-00-npqbm30x374j.riker.replit.dev" />
            <svg width="32" height="32" viewBox="0 0 32 32"><path d="M16 3l4 9 10 1-8 7 2 10-8-5-8 5 2-10-8-7 10-1z" fill="none" stroke="#5a5a5a" stroke-width="3" /></svg>
          </label>
          <button class="tool wide" aria-label="Extensiones"><svg width="34" height="34" viewBox="0 0 34 34"><path d="M3 8q0-2 2-2h7q0-4 3-4t3 4h8q2 0 2 2v7q4 0 4 4t-4 4v7q0 2-2 2H5q-2 0-2-2v-6q5 0 5-4.500T3 15z" fill="none" stroke="#1f1f1f" stroke-width="3.500" /></svg></button>
          <i class="vsep"></i>
          <button class="tool wide" aria-label="Descargas"><svg width="32" height="32" viewBox="0 0 32 32" fill="none" stroke="#1f1f1f" stroke-width="3.500"><path d="M16 0v20M8 13l8 8 8-8M2 22v8h28v-8" /></svg></button>
          <svg class="avatar" viewBox="0 0 40 40"><defs><clipPath id="face"><circle cx="20" cy="20" r="20" /></clipPath></defs><g clip-path="url(#face)"><path d="M0 0h40v40H0z" fill="#8b8b8b" /><path d="M0 8h10v4H0zM0 16h8v3H0zM30 22h10v4H30z" fill="#ddd" /><path d="M13 10q8-6 17 0v10l-5 12-8-3-5-9z" fill="#e4e4e4" /><path d="M10 16Q11 3 22 3q10 0 10 10l-4-3q-9-1-13 3l-1 8z" fill="#1c1c1c" /><path d="M18 16h6v4h-6zM26 16h5v4h-5zM20 26h7v2h-7z" fill="#222" /><path d="M2 40q2-10 12-11l6 6 8-3q8 2 9 8z" fill="#333" /><path d="M10 33l4 4M20 37l4-3M28 38l4-3" stroke="#ddd" stroke-width="2" /></g></svg>
          <button class="tool more" aria-label="Más"><svg width="8" height="28" viewBox="0 0 8 28" fill="#1f1f1f"><circle cx="4" cy="3" r="3" /><circle cx="4" cy="14" r="3" /><circle cx="4" cy="25" r="3" /></svg></button>
        </div>

        <nav class="bookmarks">
          <svg class="grid4" width="28" height="28" viewBox="0 0 28 28" fill="none" stroke="#1f1f1f" stroke-width="3"><path d="M1.500 1.500h9v9h-9zM17.500 1.500h9v9h-9zM1.500 17.500h9v9h-9zM17.500 17.500h9v9h-9z" /></svg>
          <i class="vsep"></i>
          <a v-for="b in bookmarks" :key="b.t" class="bm" href="#"><svg class="fav" viewBox="0 0 32 32" v-html="b.svg"></svg>{{ b.t }}</a>
          <button class="overflow" aria-label="Más marcadores"><svg width="20" height="20" viewBox="0 0 20 20" fill="none" stroke="#1f1f1f" stroke-width="3"><path d="M2 2l7 8-7 8M11 2l7 8-7 8" /></svg></button>
        </nav>

        <div class="viewport">
          <main class="page">
            <div class="hero">
              <svg class="texture" aria-hidden="true">
                <filter id="rock" x="0" y="0" width="100%" height="100%">
                  <feTurbulence type="fractalNoise" baseFrequency=".005 .007" numOctaves="8" seed="9" />
                  <feColorMatrix values="0 0 0 0 1  0 0 0 0 1  0 0 0 0 1  .08 0 0 0 -.025" />
                </filter>
                <rect width="100%" height="100%" filter="url(#rock)" />
              </svg>
              <header class="topnav">
                <a class="logo" href="#" aria-label="AIrontech"><b>AI</b><span>rontech</span><b>.</b><svg width="22" height="22" viewBox="0 0 22 22" fill="#e0662b"><path d="M0 0h10v10zM11 0h10v10zM0 11h10v10zM11 11h10v10z" /></svg></a>
                <nav class="links">
                  <a v-for="(n, i) in nav" :key="n" href="#" :class="{ current: i === 0 }">{{ n }}</a>
                </nav>
              </header>
              <i class="bar left"></i>
              <i class="bar right"></i>
              <h1>AIrontech</h1>
              <p class="tagline">Innovación Tecnológica Minera</p>
              <p class="date">18 de junio de 2025</p>
              <button class="cta">Descubre más<svg width="48" height="48" viewBox="0 0 24 24"><path d="M6 9l6 6 6-6" fill="none" stroke="#fff" stroke-width="2" stroke-linecap="round" stroke-linejoin="round" /></svg></button>
            </div>

            <section class="portfolio">
              <h2>Portafolio de Soluciones Ready-to-Sell</h2>
              <p class="lead">Productos desarrollados, validados y listos para escalar en la industria minera</p>
              <p class="tech"><svg width="40" height="40" viewBox="0 0 24 24" fill="none" stroke="#f08546" stroke-width="2" stroke-linecap="round" stroke-linejoin="round"><rect x="2" y="3" width="20" height="14" rx="2" /><path d="M8 21h8M12 17v4" /></svg>Tecnología en producción</p>
              <div class="cards">
                <article v-for="c in cards" :key="c" class="card">
                  <div class="cardbar"><i class="r"></i><i class="y"></i><i class="g"></i><span>{{ c }}</span></div>
                  <div class="preview"></div>
                </article>
              </div>
            </section>
          </main>
          <div class="scroll"><i></i></div>
        </div>
      </section>
      <div class="sheetfoot"><svg width="760" height="13" viewBox="0 0 760 13"><path d="M122 0h74v13h-74z" fill="#696969" /><path d="M146 0h26v3h-26z" fill="#bbb" /><path d="M217 0h28v3h-28zM288 0h28v3h-28z" fill="#444" /><path d="M487 0a12 8 0 0 0 23 0z" fill="#ccc" /></svg></div>
    </div>

    <footer class="dock">
      <template v-for="(d, i) in dock" :key="i">
        <i v-if="d.sep" class="dsep"></i>
        <button v-else class="dapp" :class="{ running: d.dot }" :aria-label="d.n">
          <svg viewBox="0 0 90 90" v-html="d.svg"></svg>
          <span v-if="d.badge" class="badge">{{ d.badge }}</span>
        </button>
      </template>
    </footer>
  </div>
</template>

<style>
body { background: #20260c; }
</style>

<style scoped>
.desktop, .desktop * { box-sizing: border-box; }
.desktop { position: relative; height: 100vh; overflow: hidden; display: flex; flex-direction: column; background: #6b89bd; font-family: "Inter", sans-serif; }
button { border: 0; padding: 0; background: none; font: inherit; color: inherit; text-align: left; white-space: nowrap; display: flex; align-items: center; justify-content: center; }
a { color: inherit; text-decoration: none; }
p, h1, h2 { margin: 0; }
svg { display: block; flex: none; overflow: visible; }
.grass { position: absolute; left: 0; bottom: 0; width: 100%; height: 180px; }

.menubar { flex: none; height: 76px; display: flex; align-items: center; padding: 0 34px 2px 38px; background: linear-gradient(90deg, #4a6aa0, #5474a8 40%, #6380b2 75%); color: #fff; font-size: 26px; font-weight: 500; text-shadow: 0 3px 6px rgba(0, 0, 0, .3); }
.apple { width: 32px; height: 32px; margin-right: 38px; }
.menu { margin-right: 41px; font-size: 25px; }
.menu.app { font-weight: 700; font-size: 26px; }
.status { margin-left: auto; display: flex; align-items: center; gap: 34px; }
.battery { display: flex; align-items: center; gap: 10px; }
.battery small { font-size: 22px; }

.sheet { position: relative; flex: 1; min-height: 0; margin-top: 2px; padding: 14px 16px 0; display: flex; flex-direction: column; overflow: hidden; border-radius: 20px 20px 24px 24px; border-top: 2px solid #87b095;
  background:
    linear-gradient(#4e9065 62px, #c6c6c6 62px 270px, transparent 270px),
    linear-gradient(transparent 270px, #aaa 270px, #ddd7bd 272px, #d6d0b8 394px, #999 394px, transparent 396px),
    repeating-linear-gradient(#d6d6d6 0 46px, #aeaeae 46px 48px); }
.sheetfoot { height: 13px; flex: none; margin: 0 -16px; background: #8a8a8a; display: flex; justify-content: flex-end; }
.window { position: relative; flex: 1; min-height: 0; display: flex; flex-direction: column; border-radius: 20px; overflow: hidden; background: #d2e8c2; box-shadow: 0 0 0 1px rgba(0, 0, 0, .3); }

.tabstrip { flex: none; height: 80px; display: flex; align-items: center; box-shadow: inset 0 2px #ecf6e4; }
.lights { flex: none; width: 180px; padding-left: 42px; display: flex; gap: 16px; }
.lights i { width: 24px; height: 24px; border-radius: 50%; }
.r { background: #ed6a5e; } .y { background: #f4bf4f; } .g { background: #61c554; }
.tab { position: relative; flex: 0 1 424px; min-width: 0; height: 68px; align-self: flex-end; display: flex; align-items: center; padding: 0 29px 12px 21px; font-size: 23px; color: #1f1f1f; }
.fav { width: 32px; height: 32px; }
.tabname { flex: 1; min-width: 0; margin: 0 18px 0 18px; overflow: hidden; justify-content: flex-start; mask-image: linear-gradient(90deg, #000 78%, transparent 98%); }
.full .tabname { mask-image: none; }
.tab::after { content: ""; position: absolute; right: -2px; top: 12px; width: 4px; height: 32px; border-radius: 2px; background: #fff; }
.tab:has(+ .active)::after { display: none; }
.tab.active { z-index: 1; }
.tab.active::before { content: ""; position: absolute; z-index: -1; left: 9px; right: 4px; top: 0; bottom: 0; border-radius: 20px 20px 0 0; background: #fff; }
.tab.active::after { z-index: -1; left: -12px; right: -17px; top: auto; bottom: 0; width: auto; height: 21px; border-radius: 0; background: radial-gradient(circle at 0 0, transparent 20px, #fff 21px) left bottom / 21px 21px no-repeat, radial-gradient(circle at 100% 0, transparent 20px, #fff 21px) right bottom / 21px 21px no-repeat; }
.plus { width: 70px; height: 68px; padding-bottom: 2px; }
.search-tabs { width: 56px; height: 56px; border-radius: 20px; background: #fff; margin: 0 12px 0 auto; }

.toolbar { flex: none; height: 92px; display: flex; align-items: center; padding: 0 26px 0 8px; background: #fff; border-radius: 20px 20px 0 0; }
.tool { width: 72px; height: 56px; }
.tool.wide { width: 104px; }
.tool.more { width: 40px; margin-left: 30px; }
.omnibox { flex: 1; height: 68px; margin-left: 16px; display: flex; align-items: center; border-radius: 34px; padding: 0 32px 0 10px; background: #e1e1e1; }
.site { width: 48px; height: 48px; border-radius: 50%; background: #fff; display: flex; align-items: center; justify-content: center; }
.omnibox input { flex: 1; min-width: 0; margin: 0 16px; border: 0; padding: 0; background: none; font: 28px "Inter", sans-serif; font-variant-ligatures: no-contextual; color: #1f1f1f; }
.vsep { width: 4px; height: 32px; border-radius: 2px; background: #c9e5b6; }
.avatar { width: 40px; height: 40px; }
.bookmarks { flex: none; height: 70px; display: flex; align-items: center; gap: 32px; padding: 0 62px 14px 38px; background: #fff; border-bottom: 2px solid #c6c6c6; font-size: 24px; color: #1f1f1f; }
.bookmarks .vsep { margin: 0 0 0 -2px; }
.bm { display: flex; align-items: center; gap: 12px; }
.overflow { margin-left: auto; }

.viewport { flex: 1; min-height: 0; display: flex; background: #141414; }
.page { flex: 1; min-width: 0; overflow: hidden; }
.scroll { width: 16px; }
.scroll i { display: block; height: 119px; border-radius: 8px; background: #f08546; }
.hero { position: relative; height: 1198px; display: flex; flex-direction: column; align-items: center; border-bottom: 2px solid #303030;
  background: linear-gradient(90deg, rgba(255, 255, 255, .03) 2px, transparent 2px) 0 0 / 100px 100px, linear-gradient(rgba(255, 255, 255, .03) 2px, transparent 2px) 0 0 / 100px 100px, linear-gradient(90deg, #0c0c0c, #121212 18%, #131313 70%, #0a0a0a); }
.texture { position: absolute; inset: 0; width: 100%; height: 100%; }
.topnav { position: relative; width: 100%; height: 212px; padding: 0 238px; display: flex; align-items: center; border: 2px solid #2a2a2a; border-left: 0; background: linear-gradient(100deg, #151515, #1c1c1c 30%, #1e1e1e 70%, #141414 95%); }
.logo { position: relative; display: flex; align-items: baseline; font: 48px "Liberation Sans", sans-serif; color: #fff; width: 238px; margin-top: -4px; }
.logo b { color: #e0662b; }
.logo svg { position: absolute; right: 0; top: -3px; }
.links { display: flex; gap: 48px; margin-left: 232px; font-size: 32px; line-height: 38px; font-weight: 500; color: #fff; }
.links a { padding: 30px 32px 26px; border-bottom: 4px solid transparent; white-space: nowrap; }
.links .current { color: #f08546; border-color: #f08546; }
.bar { position: absolute; top: 598px; width: 8px; height: 160px; background: linear-gradient(rgba(240, 133, 70, .5), transparent); }
.left { left: 40px; } .right { right: 40px; }
h1 { position: relative; margin-top: 42px; font: 700 192px/240px "Montserrat", "Inter", sans-serif; background: linear-gradient(135deg, #fce4d5, #f08546 50%, #ee7635); background-clip: text; color: transparent; }
.tagline { position: relative; margin-top: 12px; font: 300 96px/120px "Montserrat", "Inter", sans-serif; color: #fff; }
.date { position: relative; margin-top: 20px; font-size: 36px; line-height: 56px; color: #a3a3a3; }
.cta { position: relative; margin-top: 96px; width: 540px; height: 120px; gap: 24px; border-radius: 60px; background: linear-gradient(90deg, #f08546, #ed7534); color: #fff; font-size: 40px; font-weight: 600; box-shadow: 0 16px 32px rgba(0, 0, 0, .3); }
.cta svg { margin-top: 12px; }

.portfolio { display: flex; flex-direction: column; align-items: center; padding: 18px 488px 0; background: #141414; }
h2 { font: 700 120px/150px "Montserrat", "Inter", sans-serif; color: #f08546; white-space: nowrap; }
.lead { margin-top: 48px; font-size: 40px; line-height: 56px; color: #a3a3a3; }
.tech { margin-top: 32px; display: flex; align-items: center; gap: 16px; font-size: 32px; line-height: 48px; font-weight: 500; color: #f08546; }
.cards { align-self: stretch; margin-top: 56px; display: grid; grid-template-columns: 1fr 1fr; gap: 96px; }
.card { height: 800px; padding: 24px; border-radius: 32px; background: linear-gradient(100deg, #222835, #192030); }
.cardbar { display: flex; align-items: center; gap: 16px; }
.cardbar i { width: 24px; height: 24px; border-radius: 50%; }
.cardbar .r { background: #dd4f4a; } .cardbar .y { background: #dfb23c; } .cardbar .g { background: #5abf66; }
.cardbar span { flex: 1; height: 48px; padding: 0 32px; border-radius: 24px; background: #393f4e; font: 24px/48px "DejaVu Sans Mono", monospace; color: #9ca3af; }
.preview { margin-top: 24px; height: 600px; border-radius: 24px; border: 1px solid rgba(255, 255, 255, .12); border-width: 0 1px; }

.dock { position: relative; flex: none; align-self: center; height: 142px; margin: 6px 0 10px; padding: 18px 20px 0; display: flex; gap: 29px; align-items: flex-start; border: 2px solid rgba(175, 182, 145, .6); border-radius: 44px; background: linear-gradient(90deg, #6d735b, #7a7f5d 45%, #878f5a); }
.dapp { position: relative; width: 90px; height: 90px; }
.dapp svg { width: 90px; height: 90px; filter: drop-shadow(0 2px 2px rgba(0, 0, 0, .35)); }
.running::after { content: ""; position: absolute; left: 41px; top: 110px; width: 8px; height: 8px; border-radius: 50%; background: #000; }
.badge { position: absolute; right: -15px; top: -12px; width: 44px; height: 44px; border-radius: 50%; background: #e04f40; color: #fff; font-size: 26px; line-height: 44px; text-align: center; }
.dsep { width: 2px; height: 106px; margin: -4px 12px 0; background: #4f5530; }
</style>
